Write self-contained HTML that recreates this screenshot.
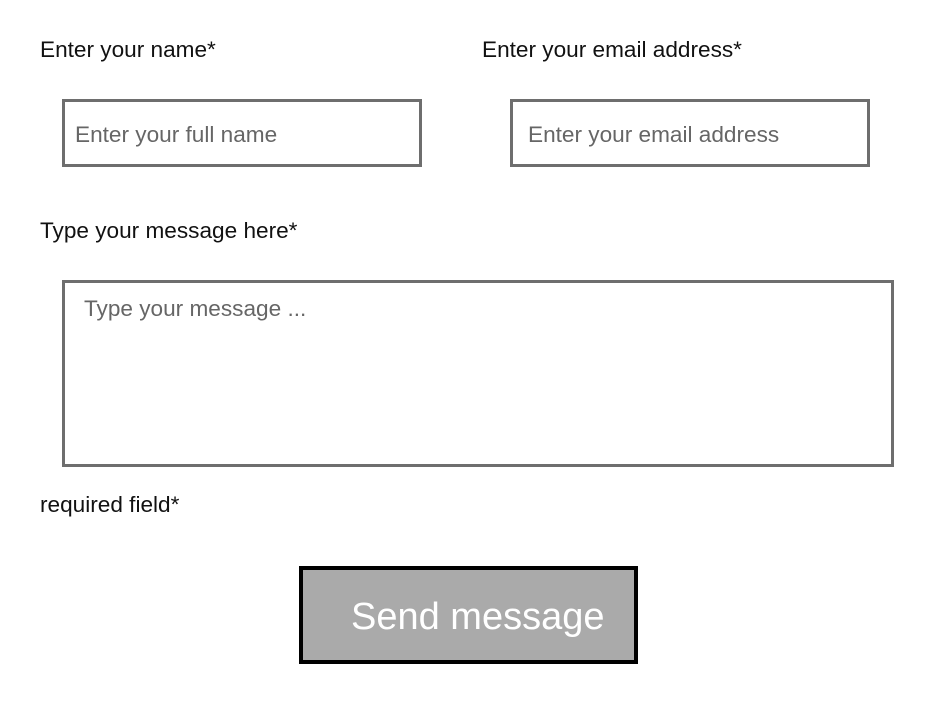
<!DOCTYPE html>
<html><head><style>
body{margin:0;width:925px;height:726px;background:#fff;position:relative;font-family:"Liberation Sans",sans-serif;overflow:hidden}
.l{position:absolute;font-size:22.6px;color:#111;line-height:1}
.b{position:absolute;box-sizing:border-box;border:3px solid #6e6e6e;background:#fff}
.p{position:absolute;font-size:22.6px;color:#666;line-height:1}
</style></head><body>
<div class="l" style="left:40px;top:39px">Enter your name*</div>
<div class="l" style="left:482px;top:39px">Enter your email address*</div>
<div class="b" style="left:62px;top:99px;width:360px;height:68px"></div>
<div class="p" style="left:75px;top:124px">Enter your full name</div>
<div class="b" style="left:510px;top:99px;width:360px;height:68px"></div>
<div class="p" style="left:528px;top:124px">Enter your email address</div>
<div class="l" style="left:40px;top:220px">Type your message here*</div>
<div class="b" style="left:62px;top:280px;width:832px;height:187px"></div>
<div class="p" style="left:84px;top:298px">Type your message ...</div>
<div class="l" style="left:40px;top:494px">required field*</div>
<div style="position:absolute;left:299px;top:566px;width:339px;height:98px;box-sizing:border-box;border:4px solid #000;background:#aaa"></div>
<div style="position:absolute;left:351px;top:598px;font-size:38px;color:#fff;line-height:1">Send message</div>
</body></html>
